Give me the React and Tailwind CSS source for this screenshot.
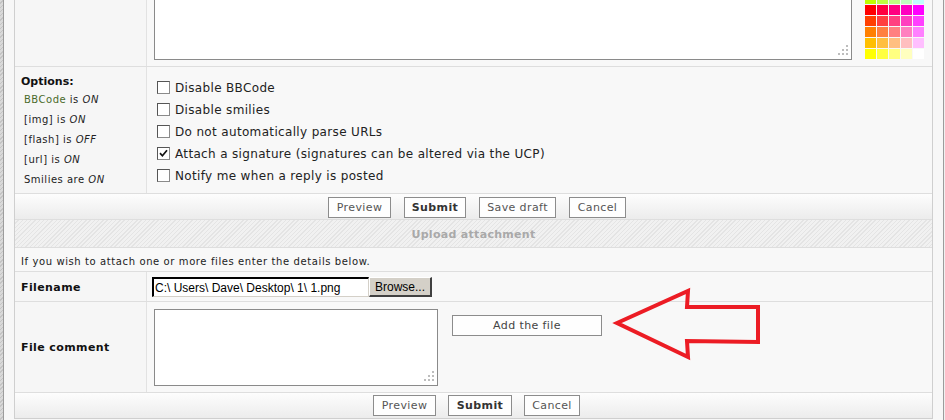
import React from "react";

const palette = [
  ["#BFFF00", "#BFFF40", "#BFFF80", "#BFFFBF", "#BFFFFF"],
  ["#FF0000", "#FF0040", "#FF0080", "#FF00BF", "#FF00FF"],
  ["#FF4000", "#FF4040", "#FF4080", "#FF40BF", "#FF40FF"],
  ["#FF8000", "#FF8040", "#FF8080", "#FF80BF", "#FF80FF"],
  ["#FFBF00", "#FFBF40", "#FFBF80", "#FFBFBF", "#FFBFFF"],
  ["#FFFF00", "#FFFF40", "#FFFF80", "#FFFFBF", "#FFFFFF"],
];

function Box({ checked }) {
  return (
    <span className="w-[13px] h-[13px] border border-t-[#555] border-l-[#555] border-r-[#8a8a8a] border-b-[#8a8a8a] bg-white flex items-center justify-center shrink-0">
      {checked && (
        <svg width="9" height="9" viewBox="0 0 9 9">
          <path d="M1 4.2 L3.4 6.8 L8 1.2" stroke="#111" strokeWidth="1.7" fill="none" />
        </svg>
      )}
    </span>
  );
}

function Grip() {
  return (
    <svg width="10" height="10" viewBox="0 0 10 10" className="absolute right-[3px] bottom-[4px]">
      <rect x="8" y="0" width="2" height="2" fill="#bdbdbd" />
      <rect x="4" y="4" width="2" height="2" fill="#bdbdbd" />
      <rect x="8" y="4" width="2" height="2" fill="#bdbdbd" />
      <rect x="0" y="8" width="2" height="2" fill="#bdbdbd" />
      <rect x="4" y="8" width="2" height="2" fill="#bdbdbd" />
      <rect x="8" y="8" width="2" height="2" fill="#bdbdbd" />
    </svg>
  );
}

function Btn({ children, bold, w }) {
  return (
    <div
      className={`h-[21px] border border-[#8c8c8c] bg-[#fefefe] flex items-center justify-center pt-[1px] text-[11px] tracking-[0.4px] ${
        bold ? "font-bold text-[#333]" : "text-[#555]"
      } ${w}`}
    >
      {children}
    </div>
  );
}

const hatch =
  "bg-[repeating-linear-gradient(135deg,#f1f1f1_0px,#f1f1f1_2px,#e4e4e4_2px,#e4e4e4_3px)]";

export default function App() {
  return (
    <div className="relative w-[945px] h-[420px] overflow-hidden flex bg-[#f7f7f7] font-['DejaVu_Sans',Verdana,sans-serif] text-[#222]">
      <div className="w-[3px] h-full bg-[repeating-linear-gradient(135deg,#d9d9d9_0px,#d9d9d9_2px,#c4c4c4_2px,#c4c4c4_3px)]" />
      <div className="w-[1px] h-full bg-[#9c9c9c]" />
      <div className="w-[10px] h-full" />

      {/* table */}
      <div className="w-[919px] h-[419px] border-x border-b border-[#cfcfcf] flex flex-col bg-[#f8f8f8]">
        {/* row 1 */}
        <div className="h-[67px] border-b border-[#dedede] flex shrink-0">
          <div className="w-[132px] bg-[#f6f6f6] border-r border-[#e2e2e2]" />
          <div className="flex-1 flex pl-[7px]">
            <div className="relative w-[698px] h-[60px] bg-white border-x border-b border-[#8a8a8a]">
              <Grip />
            </div>
            <div className="ml-[13px] mt-[-6px] flex flex-col gap-[1px]">
              {palette.map((row, i) => (
                <div key={i} className="flex gap-[1px]">
                  {row.map((c) => (
                    <div key={c} className="w-[11px] h-[10px]" style={{ backgroundColor: c }} />
                  ))}
                </div>
              ))}
            </div>
          </div>
        </div>

        {/* row 2 options */}
        <div className="h-[127px] border-b border-[#dedede] flex shrink-0">
          <div className="w-[132px] bg-[#f6f6f6] border-r border-[#e2e2e2] pl-[6px] pt-[8px]">
            <div className="text-[11px] font-bold text-[#111] leading-[14px]">Options:</div>
            <div className="pl-[3px] text-[10px] tracking-[0.5px] text-[#222] leading-[20px] mt-[1px]">
              <div>
                <span className="text-[#4a6a2b]">BBCode</span> is <i>ON</i>
              </div>
              <div>
                [img] is <i>ON</i>
              </div>
              <div>
                [flash] is <i>OFF</i>
              </div>
              <div>
                [url] is <i>ON</i>
              </div>
              <div>
                Smilies are <i>ON</i>
              </div>
            </div>
          </div>
          <div className="flex-1 pl-[10px] pt-[14px] flex flex-col gap-[9px]">
            {[
              ["Disable BBCode", false],
              ["Disable smilies", false],
              ["Do not automatically parse URLs", false],
              ["Attach a signature (signatures can be altered via the UCP)", true],
              ["Notify me when a reply is posted", false],
            ].map(([t, c]) => (
              <div key={t} className="flex items-center h-[13px]">
                <Box checked={c} />
                <span className="ml-[5px] text-[12px] tracking-[0.34px] text-[#222] whitespace-nowrap">{t}</span>
              </div>
            ))}
          </div>
        </div>

        {/* row 3 buttons */}
        <div className="h-[26px] border-b border-[#dedede] shrink-0 bg-gradient-to-b from-[#fdfdfd] to-[#ececec] flex items-start pt-[3px] pl-[313px] gap-[13px]">
          <Btn w="w-[63px]">Preview</Btn>
          <Btn bold w="w-[62px]">Submit</Btn>
          <Btn w="w-[77px]">Save draft</Btn>
          <Btn w="w-[57px]">Cancel</Btn>
        </div>

        {/* row 4 header */}
        <div className={`h-[28px] border-b border-[#dedede] shrink-0 flex items-center justify-center pt-[3px] ${hatch}`}>
          <span className="text-[11px] font-bold text-[#a9a9a9] tracking-[0.3px]">Upload attachment</span>
        </div>

        {/* row 5 info */}
        <div className="h-[24px] border-b border-[#dedede] shrink-0 flex items-center pl-[6px] pt-[3px]">
          <span className="text-[10px] tracking-[0.6px] text-[#222]">
            If you wish to attach one or more files enter the details below.
          </span>
        </div>

        {/* row 6 filename */}
        <div className="h-[30px] border-b border-[#dedede] shrink-0 flex">
          <div className="w-[132px] bg-[#f6f6f6] border-r border-[#e2e2e2] pl-[6px] flex items-center pt-[4px]">
            <span className="text-[11px] font-bold text-[#111] tracking-[0.4px]">Filename</span>
          </div>
          <div className="flex-1 flex items-start pl-[5px] pt-[5px]">
            <div className="w-[217px] h-[20px] bg-white border-t-2 border-l-2 border-t-black border-l-black border-r border-b border-r-[#d4d0c8] border-b-[#d4d0c8] flex items-center pl-[1px] font-['Liberation_Sans',Arial,sans-serif] text-[12px] text-black whitespace-nowrap overflow-hidden">
              C:\ Users\ Dave\ Desktop\ 1\ 1.png
            </div>
            <div className="w-[63px] h-[20px] bg-[#d4d0c8] border-t border-l border-t-white border-l-white border-r-2 border-b-2 border-r-[#404040] border-b-[#404040] flex items-center justify-center font-['Liberation_Sans',Arial,sans-serif] text-[12px] text-black">
              Browse...
            </div>
          </div>
        </div>

        {/* row 7 file comment */}
        <div className="h-[91px] border-b border-[#dedede] shrink-0 flex">
          <div className="w-[132px] bg-[#f6f6f6] border-r border-[#e2e2e2] pl-[6px] flex items-center pt-[3px]">
            <span className="text-[11px] font-bold text-[#111] tracking-[0.4px]">File comment</span>
          </div>
          <div className="flex-1 flex pl-[7px] pt-[7px]">
            <div className="relative w-[284px] h-[77px] bg-white border border-[#8a8a8a]">
              <Grip />
            </div>
            <div className="ml-[14px] mt-[6px] w-[150px] h-[21px] border border-[#8c8c8c] bg-[#fefefe] flex items-center justify-center pt-[1px] text-[11px] tracking-[0.4px] text-[#444]">
              Add the file
            </div>
          </div>
        </div>

        {/* row 8 buttons */}
        <div className="flex-1 shrink-0 bg-gradient-to-b from-[#fdfdfd] to-[#ececec] flex items-start pt-[2px] pl-[358px] gap-[12px]">
          <Btn w="w-[63px]">Preview</Btn>
          <Btn bold w="w-[64px]">Submit</Btn>
          <Btn w="w-[56px]">Cancel</Btn>
        </div>
      </div>

      <div className="w-[10px] h-full" />
      <div className="w-[1px] h-full bg-[#9c9c9c]" />
      <div className="w-[1px] h-full bg-[#f0f0f0]" />

      <svg className="absolute left-0 top-0 pointer-events-none" width="945" height="420" viewBox="0 0 945 420">
        <polygon
          points="617,323 688,291 687,307 758,307 758,342 687,341 688,357"
          fill="none"
          stroke="#ec1c24"
          strokeWidth="4"
          strokeLinejoin="miter"
        />
      </svg>
    </div>
  );
}
